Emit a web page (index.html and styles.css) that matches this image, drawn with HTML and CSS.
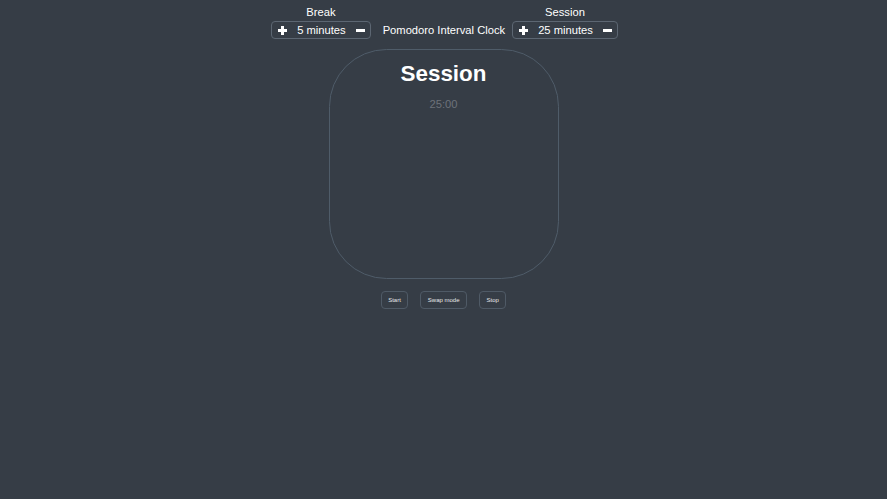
FILE: index.html
```html
<!DOCTYPE html>
<html lang="en">
<head>
<meta charset="utf-8">
<title>Pomodoro Interval Clock</title>
<link rel="stylesheet" href="styles.css">
</head>
<body>
<header class="top">
  <div class="group">
    <div class="label">Break</div>
    <div class="control">
      <svg class="icon" width="9" height="9" viewBox="0 0 9 9"><rect x="3" y="0" width="3" height="9"/><rect x="0" y="3" width="9" height="3"/></svg>
      <span class="value">5 minutes</span>
      <svg class="icon" width="9" height="9" viewBox="0 0 9 9"><rect x="0" y="3" width="9" height="3"/></svg>
    </div>
  </div>
  <div class="title">Pomodoro Interval Clock</div>
  <div class="group">
    <div class="label">Session</div>
    <div class="control">
      <svg class="icon" width="9" height="9" viewBox="0 0 9 9"><rect x="3" y="0" width="3" height="9"/><rect x="0" y="3" width="9" height="3"/></svg>
      <span class="value">25 minutes</span>
      <svg class="icon" width="9" height="9" viewBox="0 0 9 9"><rect x="0" y="3" width="9" height="3"/></svg>
    </div>
  </div>
</header>
<main class="clock">
  <h1 class="mode">Session</h1>
  <div class="time">25:00</div>
</main>
<nav class="actions">
  <button class="btn">Start</button>
  <button class="btn">Swap mode</button>
  <button class="btn">Stop</button>
</nav>
</body>
</html>
```
FILE: styles.css
```css
html, body {
  margin: 0;
  padding: 0;
}
body {
  background: #363d46;
  color: #ffffff;
  font-family: "Liberation Sans", Arial, sans-serif;
  font-size: 11.2px;
  min-height: 499px;
}
.top {
  display: flex;
  justify-content: center;
  align-items: flex-end;
  padding: 6px 0 0 2px;
}
.group {
  display: flex;
  flex-direction: column;
  align-items: center;
}
.label {
  line-height: 13px;
  margin-bottom: 2px;
}
.control {
  display: flex;
  align-items: center;
  gap: 10px;
  height: 16px;
  padding: 0 5px 0 6px;
  border: 1px solid #5c6672;
  border-radius: 4px;
}
.icon {
  fill: #ffffff;
  display: block;
}
.value {
  line-height: 16px;
}
.title {
  line-height: 18px;
  margin: 0 7px 0 12px;
}
.clock {
  width: 228px;
  height: 228px;
  margin: 10px auto 0;
  border: 1px solid #4f5c69;
  border-radius: 25%;
  display: flex;
  flex-direction: column;
  align-items: center;
}
.mode {
  margin: 11px 0 0;
  font-size: 22.4px;
  font-weight: bold;
  line-height: 26px;
}
.time {
  margin-top: 11px;
  color: #6d727a;
  line-height: 13px;
}
.actions {
  display: flex;
  justify-content: center;
  gap: 12px;
  margin-top: 12px;
}
.btn {
  font-family: "Liberation Sans", Arial, sans-serif;
  font-size: 6px;
  color: #e6e8ea;
  background: transparent;
  border: 1px solid #4f5a66;
  border-radius: 4px;
  height: 18px;
  padding: 0 6.5px;
  line-height: 16px;
}
```
